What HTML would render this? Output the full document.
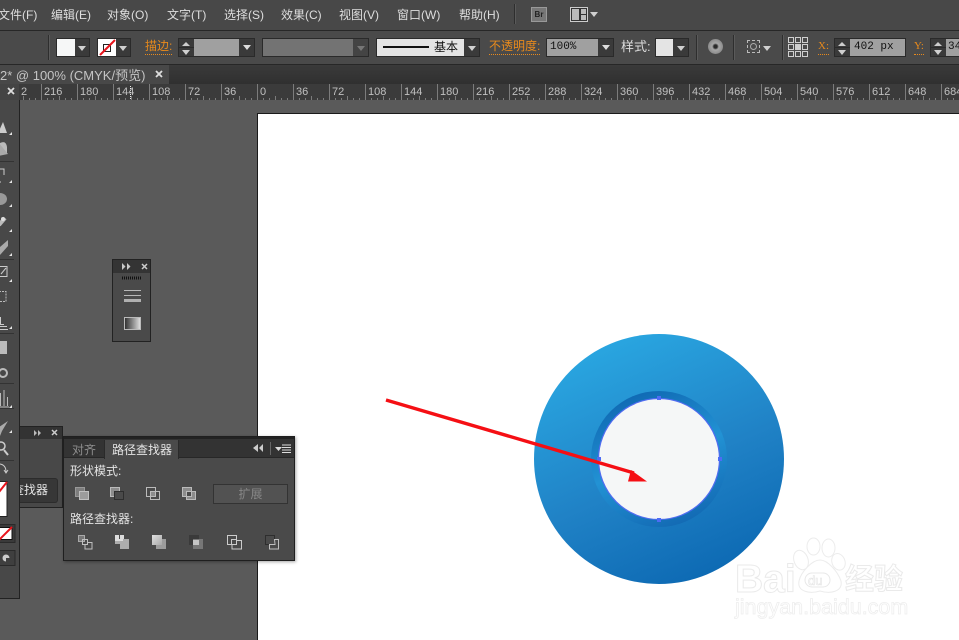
<!DOCTYPE html>
<html><head><meta charset="utf-8">
<style>
html,body{margin:0;padding:0;background:#595959}
#r{position:relative;width:959px;height:640px;overflow:hidden;background:#5a5a5a;font-family:"Liberation Sans","Noto Sans CJK SC",sans-serif;color:#dcdcdc}
#r div{position:absolute;box-sizing:border-box}
.m{top:7px;font-size:12px;line-height:16px;white-space:nowrap;color:#dedede}
.l{font-size:12px;line-height:16px;white-space:nowrap}
.o{color:#e88a1c;border-bottom:1px dotted #e88a1c;line-height:15px;height:16px}
.box{background:#3a3a3a;border:1px solid #2a2a2a}
.t{width:0;height:0;border-left:4px solid transparent;border-right:4px solid transparent;border-top:5px solid #d0d0d0}
.u{width:0;height:0;border-left:4px solid transparent;border-right:4px solid transparent;border-bottom:4px solid #ccc}
.sep{width:1px;background:#2e2e2e;border-right:1px solid #5a5a5a;box-sizing:content-box!important}
.rl{top:85px;margin-left:1px;font-size:11px;line-height:14px;color:#c0c0c0;font-family:"Liberation Sans",sans-serif;white-space:nowrap}
.mono{color:#111;font-size:11px;font-family:"Liberation Mono",monospace}
</style></head><body><div id="r">

<!-- menu bar -->
<div style="left:0;top:0;width:959px;height:31px;background:#484848;border-bottom:1px solid #272727"></div>
<div class="m" style="left:-2px">文件(F)</div>
<div class="m" style="left:51px">编辑(E)</div>
<div class="m" style="left:107px">对象(O)</div>
<div class="m" style="left:167px">文字(T)</div>
<div class="m" style="left:224px">选择(S)</div>
<div class="m" style="left:281px">效果(C)</div>
<div class="m" style="left:339px">视图(V)</div>
<div class="m" style="left:397px">窗口(W)</div>
<div class="m" style="left:459px">帮助(H)</div>
<div class="sep" style="left:514px;top:4px;height:20px"></div>
<div style="left:531px;top:7px;width:16px;height:15px;background:#777;border:1px solid #999;font-size:8px;line-height:13px;text-align:center;color:#222;font-weight:bold">Br</div>
<div style="left:570px;top:7px;width:18px;height:15px;border:1px solid #ccc;background:#333"></div>
<div style="left:572px;top:9px;width:7px;height:11px;background:#bbb"></div>
<div style="left:581px;top:9px;width:5px;height:5px;background:#bbb"></div>
<div style="left:581px;top:15px;width:5px;height:5px;background:#bbb"></div>
<div class="t" style="left:590px;top:12px"></div>

<!-- control bar -->
<div style="left:0;top:31px;width:959px;height:34px;background:#4a4a4a;border-bottom:1px solid #272727"></div>
<div class="sep" style="left:48px;top:35px;height:25px"></div>
<div class="box" style="left:56px;top:38px;width:34px;height:19px"></div>
<div style="left:57px;top:39px;width:18px;height:17px;background:#f6f7f7"></div>
<div class="t" style="left:78px;top:46px"></div>
<div class="box" style="left:97px;top:38px;width:34px;height:19px"></div>
<svg style="position:absolute;left:98px;top:39px" width="18" height="17"><rect width="18" height="17" fill="#fff"/><rect x="5.500" y="5.500" width="7" height="7" fill="none" stroke="#222"/><path d="M2 16L17 1" stroke="#e8141c" stroke-width="2"/></svg>
<div class="t" style="left:119px;top:46px"></div>
<div class="l o" style="left:145px;top:39px">描边:</div>
<div class="box" style="left:178px;top:38px;width:77px;height:19px"></div>
<div style="left:194px;top:39px;width:45px;height:17px;background:#a0a0a0"></div>
<div style="left:179px;top:47px;width:15px;height:1px;background:#2a2a2a"></div>
<div class="u" style="left:182px;top:42px"></div>
<div class="t" style="left:182px;top:50px"></div>
<div class="t" style="left:243px;top:45px;border-top-color:#ddd"></div>
<div class="box" style="left:262px;top:38px;width:107px;height:19px;background:#444"></div>
<div style="left:263px;top:39px;width:90px;height:17px;background:#737373"></div>
<div class="t" style="left:357px;top:46px;border-top-color:#777"></div>
<div class="box" style="left:376px;top:38px;width:104px;height:19px;background:#3a3a3a"></div>
<div style="left:377px;top:39px;width:87px;height:17px;background:#e4e4e4"></div>
<div style="left:383px;top:46px;width:46px;height:2px;background:#111"></div>
<div class="l" style="left:434px;top:39px;color:#111">基本</div>
<div class="t" style="left:468px;top:46px"></div>
<div class="l o" style="left:489px;top:39px">不透明度:</div>
<div class="box" style="left:546px;top:38px;width:68px;height:19px"></div>
<div style="left:547px;top:39px;width:51px;height:17px;background:#a0a0a0"></div>
<div class="l mono" style="left:550px;top:39px">100%</div>
<div class="t" style="left:602px;top:45px;border-top-color:#ddd"></div>
<div class="l" style="left:621px;top:39px;font-size:13px">样式:</div>
<div class="box" style="left:655px;top:38px;width:34px;height:19px"></div>
<div style="left:656px;top:39px;width:17px;height:17px;background:#e4e4e4"></div>
<div class="t" style="left:677px;top:46px"></div>
<div class="sep" style="left:696px;top:35px;height:25px"></div>
<div style="left:708px;top:39px;width:15px;height:15px;border-radius:50%;background:radial-gradient(circle,#2a2a2a 0 15%,#a8a8a8 32%,#8c8c8c 70%,#6a6a6a 100%)"></div>
<div class="sep" style="left:733px;top:35px;height:25px"></div>
<div style="left:747px;top:40px;width:13px;height:13px;border:1px dashed #bbb"></div>
<div style="left:750px;top:43px;width:7px;height:7px;border:1px solid #aaa;border-radius:50%"></div>
<div class="t" style="left:763px;top:46px"></div>
<div class="sep" style="left:782px;top:35px;height:25px"></div>
<svg style="position:absolute;left:788px;top:37px" width="20" height="20" fill="none" stroke="#cfcfcf"><rect x=".5" y=".5" width="5" height="5"/><rect x="7.500" y=".5" width="5" height="5"/><rect x="14.500" y=".5" width="5" height="5"/><rect x=".5" y="7.500" width="5" height="5"/><rect x="7.500" y="7.500" width="5" height="5" fill="#cfcfcf"/><rect x="14.500" y="7.500" width="5" height="5"/><rect x=".5" y="14.500" width="5" height="5"/><rect x="7.500" y="14.500" width="5" height="5"/><rect x="14.500" y="14.500" width="5" height="5"/></svg>
<div class="l o" style="left:818px;top:39px;font-family:'Liberation Serif',serif;font-size:11px">X:</div>
<div class="box" style="left:834px;top:38px;width:72px;height:19px"></div>
<div style="left:850px;top:39px;width:55px;height:17px;background:#a0a0a0"></div>
<div style="left:835px;top:47px;width:15px;height:1px;background:#2a2a2a"></div>
<div class="u" style="left:838px;top:42px"></div>
<div class="t" style="left:838px;top:50px"></div>
<div class="l mono" style="left:854px;top:39px">402 px</div>
<div class="l o" style="left:914px;top:39px;font-family:'Liberation Serif',serif;font-size:11px">Y:</div>
<div class="box" style="left:930px;top:38px;width:40px;height:19px"></div>
<div style="left:946px;top:39px;width:20px;height:17px;background:#a0a0a0"></div>
<div style="left:931px;top:47px;width:15px;height:1px;background:#2a2a2a"></div>
<div class="u" style="left:934px;top:42px"></div>
<div class="t" style="left:934px;top:50px"></div>
<div class="l mono" style="left:948px;top:39px">34</div>

<!-- tab row -->
<div style="left:0;top:65px;width:959px;height:19px;background:linear-gradient(#3a3a3a,#303030)"></div>
<div style="left:0;top:65px;width:169px;height:20px;background:#484848"></div>
<div class="l" style="left:0;top:68px;color:#c4c4c4;font-size:13px">2* @ 100% (CMYK/预览)</div>
<svg style="position:absolute;left:155px;top:70px" width="9" height="9"><path d="M1 1l6 6M7 1l-6 6" stroke="#ddd" stroke-width="1.800"/></svg>

<!-- ruler -->
<div style="left:0;top:84px;width:959px;height:16px;background:#3b3b3b"></div>
<svg style="position:absolute;left:0;top:84px" width="959" height="16"><defs><pattern id="rt" x="5" y="0" width="36" height="16" patternUnits="userSpaceOnUse"><path d="M.5 0V16M6.500 14V16M12.500 14V16M18.500 12V16M24.500 14V16M30.500 14V16" stroke="#7c7c7c" fill="none"/></pattern></defs><rect width="959" height="16" fill="url(#rt)"/><path d="M130.500 2V15" stroke="#eee" stroke-dasharray="1 1"/></svg>
<div style="left:0;top:84px;width:19px;height:16px;background:#444"></div>
<svg style="position:absolute;left:7px;top:87px" width="9" height="9"><path d="M1 1l6 6M7 1l-6 6" stroke="#ddd" stroke-width="1.800"/></svg>
<div class="rl" style="left:20px">2</div><div class="rl" style="left:43px">216</div><div class="rl" style="left:79px">180</div><div class="rl" style="left:115px">144</div><div class="rl" style="left:151px">108</div><div class="rl" style="left:187px">72</div><div class="rl" style="left:223px">36</div><div class="rl" style="left:259px">0</div><div class="rl" style="left:295px">36</div><div class="rl" style="left:331px">72</div><div class="rl" style="left:367px">108</div><div class="rl" style="left:403px">144</div><div class="rl" style="left:439px">180</div><div class="rl" style="left:475px">216</div><div class="rl" style="left:511px">252</div><div class="rl" style="left:547px">288</div><div class="rl" style="left:583px">324</div><div class="rl" style="left:619px">360</div><div class="rl" style="left:655px">396</div><div class="rl" style="left:691px">432</div><div class="rl" style="left:727px">468</div><div class="rl" style="left:763px">504</div><div class="rl" style="left:799px">540</div><div class="rl" style="left:835px">576</div><div class="rl" style="left:871px">612</div><div class="rl" style="left:907px">648</div><div class="rl" style="left:943px">684</div>

<!-- artboard -->
<div style="left:257px;top:113px;width:702px;height:527px;background:#fff;border-left:1px solid #1a1a1a;border-top:1px solid #1a1a1a"></div>

<svg style="position:absolute;left:0;top:0" width="959" height="640">
<defs>
<linearGradient id="g1" x1="0.28" y1="0" x2="0.72" y2="1"><stop offset="0" stop-color="#2aa8e2"/><stop offset=".55" stop-color="#2082c6"/><stop offset="1" stop-color="#0c68b2"/></linearGradient>
<linearGradient id="g2" x1="0.3" y1="0" x2="0.7" y2="1"><stop offset="0" stop-color="#0f68b2"/><stop offset=".5" stop-color="#2292d4"/><stop offset="1" stop-color="#1268b2"/></linearGradient>
</defs>
<circle cx="659" cy="459" r="125" fill="url(#g1)"/>
<circle cx="659" cy="459" r="68" fill="url(#g2)"/>
<circle cx="659" cy="459" r="60.500" fill="#f5f7f7" stroke="#4f6cf0" stroke-width="1.200"/>
<g fill="#4d6cf5"><rect x="657" y="396" width="4" height="4"/><rect x="657" y="518" width="4" height="4"/><rect x="597" y="457" width="4" height="4"/><rect x="718" y="457" width="4" height="4"/></g>
<path d="M386 400L634 473" stroke="#f50f14" stroke-width="3.400" fill="none"/>
<path d="M647 481.500L628 481.500L631 470Z" fill="#f50f14"/>
<!-- watermark -->
<g fill="#fff" stroke="#ececec" stroke-width="1">
<ellipse cx="801" cy="560" rx="7" ry="10" transform="rotate(-20 801 560)"/><ellipse cx="813.500" cy="546.500" rx="6.500" ry="8.500"/><ellipse cx="828.500" cy="548" rx="6.500" ry="9"/><ellipse cx="838.500" cy="562" rx="6.500" ry="8.500" transform="rotate(-20 838 562)"/>
<path d="M820 560C828 560 838 572 841 581C843 592 830 594 820 591C810 594 797 592 799 581C801 572 812 560 820 560Z"/>
</g>
<rect x="805" y="573" width="25" height="14" rx="7" fill="#fff" stroke="#e8e8e8"/>
<text x="735" y="592" font-family="Liberation Sans" font-weight="bold" font-size="39" fill="#fff" stroke="#eaeaea" stroke-width="1">Bai</text>
<text x="808" y="585" font-family="Liberation Sans" font-size="13" fill="#fff" stroke="#e4e4e4" stroke-width=".6">du</text>
<text x="845" y="589" font-family="Noto Sans CJK SC" font-weight="bold" font-size="29" fill="#fff" stroke="#eaeaea" stroke-width="1">经验</text>
<text x="735" y="614" font-family="Liberation Sans" font-size="21.500" fill="#fff" stroke="#eeeeee" stroke-width=".8">jingyan.baidu.com</text>
</svg>

<!-- left toolbar -->
<div style="left:0;top:100px;width:20px;height:499px;background:#484848;border-right:1px solid #222;border-bottom:1px solid #222"></div>
<svg style="position:absolute;left:0;top:100px" width="20" height="500">
<path d="M-2 33L3 22L7 33Z" fill="#ccc"/>
<path d="M0 43Q6 40 7 47L7 54L0 49Z" fill="#bbb"/><path d="M-2 42L8 54L-2 56Z" fill="#aaa"/>
<path d="M0 69H4V75M-1 82H1" stroke="#ccc" fill="none"/>
<ellipse cx="0" cy="99" rx="7" ry="6" fill="#999"/>
<path d="M-1 125L5 118" stroke="#bbb" stroke-width="4"/><circle cx="3" cy="119" r="2" fill="#ddd"/>
<path d="M0 147L8 140V146L0 155Z" fill="#aaa"/>
<rect x="-3" y="166.500" width="10" height="10" fill="none" stroke="#ccc"/><path d="M1 174L6 168" stroke="#ccc"/>
<rect x="-1" y="191.500" width="7" height="10" fill="none" stroke="#bbb" stroke-dasharray="2 1"/>
<path d="M.5 217V224M-1 224.500H4M-1 226.500H7M-1 229.500H8" stroke="#ccc" fill="none"/>
<rect x="-1" y="241" width="8" height="13" fill="#bbb"/>
<circle cx="3" cy="273" r="4" fill="none" stroke="#bbb" stroke-width="2"/>
<path d="M.5 306V293M4 306V290M7.500 306V297M-1 307H9" stroke="#bbb" fill="none"/>
<path d="M-1 327L8 321L2 331L0 336Z" fill="#aaa"/>
<circle cx="1" cy="346" r="4" fill="none" stroke="#ccc" stroke-width="1.500"/><path d="M4 350L8 355" stroke="#ccc" stroke-width="2"/>
<path d="M0 364Q6 365 6 372M4 370L6 373L8 370" stroke="#ccc" fill="none"/>
<g fill="#e6e6e6"><path d="M9 35h3v-3zM9 83h3v-3zM9 107h3v-3zM9 132h3v-3zM9 156h3v-3zM9 182h3v-3zM9 229h3v-3zM9 308h3v-3zM9 333h3v-3z"/></g>
<g fill="#333"><rect y="61" width="14" height="1"/><rect y="159" width="14" height="1"/><rect y="233" width="14" height="1"/><rect y="283" width="14" height="1"/><rect y="308" width="14" height="1"/><rect y="360" width="14" height="1"/></g>
<rect x="-1" y="381.500" width="8" height="35" fill="#fff" stroke="#222"/>
<path d="M-1 392L7 382" stroke="#e8141c" stroke-width="2"/>
<rect x="-4" y="424.500" width="19" height="18" fill="#3a3a3a" stroke="#2a2a2a"/>
<rect x="-2" y="427.500" width="14" height="12" fill="#fff" stroke="#111"/>
<path d="M-1 440L12 427" stroke="#e8141c" stroke-width="2"/>
<rect x="-4" y="450.500" width="19" height="15" fill="#3f3f3f" stroke="#2a2a2a"/>
<circle cx="6" cy="458" r="3.500" fill="#ccc"/><rect x="6" y="458" width="4" height="4" fill="#3f3f3f"/>
</svg>

<!-- floating mini panel -->
<div style="left:112px;top:259px;width:39px;height:83px;background:#4a4a4a;border:1px solid #222"></div>
<div style="left:113px;top:260px;width:37px;height:13px;background:#343434"></div>
<svg style="position:absolute;left:113px;top:260px" width="37" height="70"><path d="M9 3l3.500 3.500L9 10zM14 3l3.500 3.500L14 10z" fill="#c8c8c8"/><path d="M29 4l5 5M34 4l-5 5" stroke="#ccc" stroke-width="1.500"/><path d="M9 18H29" stroke="#111" stroke-width="3" stroke-dasharray="1 1"/><path d="M11 30.500H28M11 35.500H28" stroke="#b8b8b8"/><rect x="11" y="39" width="17" height="3" fill="#b0b0b0"/></svg>
<div style="left:124px;top:317px;width:17px;height:13px;border:1px solid #bbb;background:linear-gradient(90deg,#333,#ddd)"></div>

<!-- back panel -->
<div style="left:20px;top:426px;width:43px;height:82px;background:#484848;border:1px solid #222;border-left:0"></div>
<div style="left:20px;top:427px;width:42px;height:12px;background:#333"></div>
<svg style="position:absolute;left:20px;top:427px" width="42" height="12"><path d="M14 3l3 3-3 3zM18 3l3 3-3 3z" fill="#bbb"/><path d="M32 3l5 5M37 3l-5 5" stroke="#ccc" stroke-width="1.500"/></svg>
<div style="left:20px;top:478px;width:38px;height:25px;background:#373737;border-radius:0 3px 3px 0;border:1px solid #2c2c2c;border-left:0"></div>
<div class="l" style="left:20px;top:482px;font-size:12px;width:28px;height:16px;overflow:hidden;direction:rtl;color:#e6e6e6">查找器</div>

<!-- pathfinder panel -->
<div style="left:63px;top:436px;width:232px;height:125px;background:#4a4a4a;border:1px solid #1f1f1f;box-shadow:1px 1px 3px rgba(0,0,0,.35)"></div>
<div style="left:64px;top:437px;width:230px;height:21px;background:#333;border-top:2px solid #222;border-bottom:1px solid #272727"></div>
<div style="left:104px;top:440px;width:75px;height:19px;background:#4a4a4a;border-right:1px solid #2a2a2a;border-left:1px solid #2a2a2a"></div>
<div class="l" style="left:72px;top:442px;color:#8e8e8e">对齐</div>
<div class="l" style="left:112px;top:442px;color:#e4e4e4">路径查找器</div>
<svg style="position:absolute;left:250px;top:440px" width="44" height="18"><path d="M3 8l5-4v8zM9 8l4-4v8z" fill="#ccc"/><path d="M20.500 2V15" stroke="#666"/><path d="M25 7h7l-3.500 4z" fill="#ddd"/><path d="M32 5h9M32 7.500h9M32 10h9M32 12.500h9" stroke="#ddd"/></svg>
<div class="l" style="left:70px;top:463px;color:#e4e4e4">形状模式:</div>
<div class="l" style="left:70px;top:511px;color:#e4e4e4">路径查找器:</div>
<div style="left:213px;top:484px;width:75px;height:20px;background:#525252;border:1px solid #333;font-size:12px;line-height:18px;text-align:center;color:#888">扩展</div>
<svg style="position:absolute;left:70px;top:480px" width="220" height="75" fill="none">
<defs><linearGradient id="w" x1="0" y1="0" x2="1" y2="1"><stop offset="0" stop-color="#e0e0e0"/><stop offset="1" stop-color="#a8a8a8"/></linearGradient></defs>
<rect x="5.500" y="7.500" width="9" height="9" fill="#7e7e7e" stroke="#999"/><rect x="9.500" y="11.500" width="9" height="8" fill="#9c9c9c" stroke="#c0c0c0"/>
<rect x="40.500" y="7.500" width="9" height="9" fill="#8c8c8c" stroke="#bbb"/><rect x="44.500" y="11.500" width="9" height="8" fill="#4a4a4a" stroke="#2e2e2e"/>
<g stroke="#bbb"><rect x="76.500" y="7.500" width="9" height="9"/><rect x="80.500" y="11.500" width="9" height="8"/><rect x="80.500" y="11.500" width="5" height="5" fill="#8c8c8c"/></g>
<g stroke="#bbb"><rect x="112.500" y="7.500" width="9" height="9" fill="#8c8c8c"/><rect x="116.500" y="11.500" width="9" height="8" fill="#8c8c8c"/><rect x="116.500" y="11.500" width="5" height="5" fill="#4a4a4a"/></g>
<rect x="8.500" y="55.500" width="6" height="6" fill="#777" stroke="#aaa"/><rect x="12.500" y="59.500" width="5" height="5" stroke="#c0c0c0"/><path d="M17.500 62.500h4.500v6.500h-7v-4" stroke="#c0c0c0"/>
<path d="M50 55h4v4h5v10h-9v-5h-5v-4h5z" fill="#adadad"/><rect x="45" y="55" width="4" height="4" fill="#ddd"/><rect x="50" y="55" width="4" height="4" fill="#ddd"/><path d="M45 60h8" stroke="#ddd" stroke-width="2"/>
<path d="M92 59h4v10h-10v-4h6z" fill="#9c9c9c"/><rect x="82" y="55" width="10" height="10" fill="url(#w)"/>
<rect x="119" y="55" width="10" height="10" fill="#3a3a3a"/><rect x="123" y="59" width="10" height="10" fill="#777"/><rect x="123" y="60" width="6" height="5" fill="#c4c4c4"/>
<g stroke="#ccc"><rect x="157.500" y="55.500" width="9" height="9"/><path d="M166.500 60.500h5v8.500h-9.500v-4.500"/><rect x="161.500" y="59.500" width="5" height="5"/></g>
<rect x="195.500" y="55.500" width="9" height="9" stroke="#2e2e2e"/><path d="M204.500 59.500h4v9.500h-9v-4.500h5.500z" stroke="#c0c0c0"/>
</svg>

</div></body></html>
